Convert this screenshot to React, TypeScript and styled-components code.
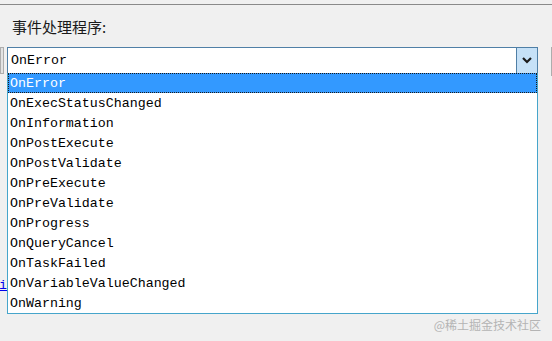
import React from 'react';
import styled, { createGlobalStyle } from 'styled-components';

const GlobalStyle = createGlobalStyle`
  html, body {
    margin: 0;
    padding: 0;
    background: #f0f0f0;
  }
`;

const Page = styled.div`
  width: 552px;
  height: 341px;
  overflow: hidden;
  position: relative;
  background: #f0f0f0;
  padding-top: 4px;
  box-sizing: border-box;
  font-family: "Liberation Mono", "Noto Sans CJK SC", monospace;
`;

const Panel = styled.div`
  border-top: 1px solid #8a8a8a;
  padding-top: 12px;
`;

const Label = styled.div`
  margin-left: 12px;
  font-family: "Noto Sans CJK SC", sans-serif;
  font-size: 15px;
  line-height: 20px;
  color: #1a1a1a;
`;

const ComboRow = styled.div`
  display: flex;
  align-items: flex-start;
  margin-top: 10px;
  gap: 3px;
`;

const Stub = styled.div<{ $w: number; $h: number }>`
  width: ${p => p.$w}px;
  height: ${p => p.$h}px;
  box-sizing: border-box;
  background: #e3e3e3;
  border: 1px solid #adadad;
  flex-shrink: 0;
`;

const Combo = styled.div`
  position: relative;
  width: 531px;
  height: 27px;
  box-sizing: border-box;
  border: 1px solid #4f7fa6;
  background: #fff;
  display: flex;
  margin-right: 10px;
  flex-shrink: 0;
`;

const ComboText = styled.div`
  flex: 1;
  padding-left: 3px;
  font-size: 13.3px;
  line-height: 25px;
  color: #000;
`;

const ComboButton = styled.div`
  width: 20px;
  border-left: 1px solid #4f7fa6;
  background: #c6e1f7;
  display: flex;
  align-items: center;
  justify-content: center;
`;

const List = styled.div`
  position: absolute;
  top: 100%;
  left: -1px;
  right: -1px;
  box-sizing: border-box;
  background: #fff;
  border: 1px solid #46a5cb;
  border-top: none;
  z-index: 2;
`;

const Item = styled.div<{ $selected?: boolean }>`
  height: 20px;
  box-sizing: border-box;
  padding-left: 1px;
  font-size: 13.3px;
  line-height: 19px;
  color: ${p => (p.$selected ? '#fff' : '#000')};
  background: ${p => (p.$selected ? '#3399ff' : 'transparent')};
  border: 1px dotted ${p => (p.$selected ? '#1a1a1a' : 'transparent')};
  white-space: nowrap;
`;

const LinkRow = styled.div`
  margin-top: 202px;
  width: 7px;
  height: 15px;
  overflow: hidden;
  display: flex;
  justify-content: flex-end;
`;

const Link = styled.span`
  color: #0000ee;
  text-decoration: underline;
  font-family: "Liberation Mono", monospace;
  font-size: 13.3px;
  line-height: 15px;
  white-space: nowrap;
`;

const Watermark = styled.div`
  position: absolute;
  right: 11px;
  bottom: 9px;
  font-family: "Noto Sans CJK SC", sans-serif;
  font-size: 12px;
  line-height: 15px;
  color: #b4b4b4;
`;

const events = [
  'OnError',
  'OnExecStatusChanged',
  'OnInformation',
  'OnPostExecute',
  'OnPostValidate',
  'OnPreExecute',
  'OnPreValidate',
  'OnProgress',
  'OnQueryCancel',
  'OnTaskFailed',
  'OnVariableValueChanged',
  'OnWarning',
];

const Chevron = () => (
  <svg width="10" height="7" viewBox="0 0 10 7">
    <polyline points="1,1 5,5 9,1" fill="none" stroke="#1b1b1b" strokeWidth="2.2" />
  </svg>
);

const App: React.FC = () => {
  const selected = 'OnError';
  return (
    <Page>
      <GlobalStyle />
      <Panel>
        <Label>事件处理程序:</Label>
        <ComboRow>
          <Stub $w={4} $h={27} />
          <Combo>
            <ComboText>{selected}</ComboText>
            <ComboButton>
              <Chevron />
            </ComboButton>
            <List>
              {events.map(name => (
                <Item key={name} $selected={name === selected}>
                  {name}
                </Item>
              ))}
            </List>
          </Combo>
          <Stub $w={10} $h={29} />
        </ComboRow>
        <LinkRow>
          <Link>ri</Link>
        </LinkRow>
      </Panel>
      <Watermark>@稀土掘金技术社区</Watermark>
    </Page>
  );
};

export default App;
